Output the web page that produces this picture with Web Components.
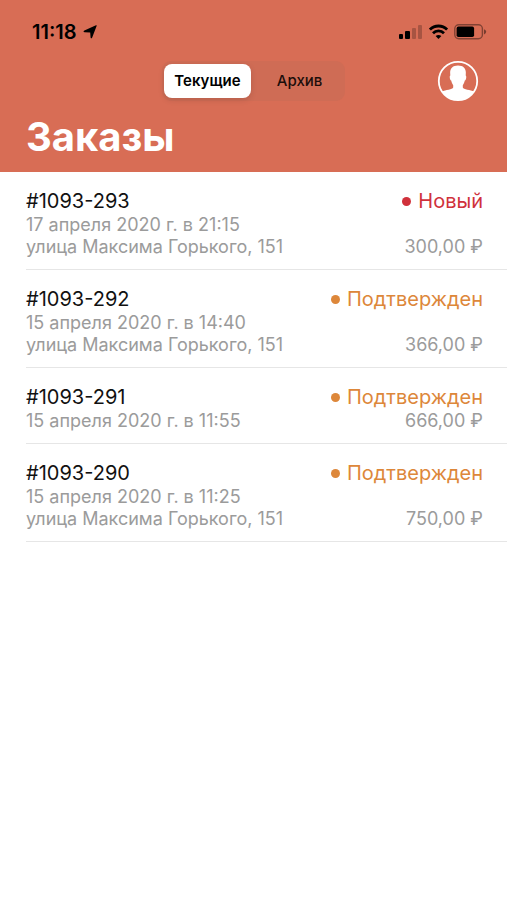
<!DOCTYPE html>
<html lang="ru">
<head>
  <meta charset="UTF-8">
  <meta name="viewport" content="width=device-width, initial-scale=1">
  <title>Заказы</title>
  <style>
    body {
      margin: 0;
      background: #fff;
      font-family: Inter, "Liberation Sans", sans-serif;
    }
  </style>
</head>
<body>
  <orders-header>
    <status-bar slot="status">11:18</status-bar>
    <segmented-tabs slot="tabs">
      <tab-button selected>Текущие</tab-button>
      <tab-button>Архив</tab-button>
    </segmented-tabs>
    <profile-button slot="profile"></profile-button>
    Заказы
  </orders-header>

  <order-list>
    <order-row status="new">
      <span slot="number">#1093-293</span>
      <span slot="date">17 апреля 2020 г. в 21:15</span>
      <span slot="address">улица Максима Горького, 151</span>
      <span slot="status">Новый</span>
      <span slot="price">300,00 ₽</span>
    </order-row>
    <order-row status="confirmed">
      <span slot="number">#1093-292</span>
      <span slot="date">15 апреля 2020 г. в 14:40</span>
      <span slot="address">улица Максима Горького, 151</span>
      <span slot="status">Подтвержден</span>
      <span slot="price">366,00 ₽</span>
    </order-row>
    <order-row status="confirmed">
      <span slot="number">#1093-291</span>
      <span slot="date">15 апреля 2020 г. в 11:55</span>
      <span slot="status">Подтвержден</span>
      <span slot="price">666,00 ₽</span>
    </order-row>
    <order-row status="confirmed">
      <span slot="number">#1093-290</span>
      <span slot="date">15 апреля 2020 г. в 11:25</span>
      <span slot="address">улица Максима Горького, 151</span>
      <span slot="status">Подтвержден</span>
      <span slot="price">750,00 ₽</span>
    </order-row>
  </order-list>

  <script>
    class OrdersHeader extends HTMLElement {
      connectedCallback() {
        this.attachShadow({ mode: 'open' });
        this.shadowRoot.innerHTML = `
          <style>
            :host {
              display: block;
              background: #d86d55;
              color: #fff;
            }

            nav {
              display: grid;
              grid-template-columns: 1fr auto 1fr;
              align-items: center;
              height: 42px;
              margin-top: 8px;
              padding: 0 28px;
            }

            .profile {
              justify-self: end;
            }

            h1 {
              margin: 0;
              padding: 10px 26px;
              font-size: 40px;
              line-height: 50px;
              font-weight: 700;
            }
          </style>

          <slot name="status"></slot>
          <nav>
            <span></span>
            <slot name="tabs"></slot>
            <div class="profile"><slot name="profile"></slot></div>
          </nav>
          <h1><slot></slot></h1>
        `;
      }
    }

    class StatusBar extends HTMLElement {
      connectedCallback() {
        this.attachShadow({ mode: 'open' });
        this.shadowRoot.innerHTML = `
          <style>
            :host {
              display: flex;
              align-items: center;
              justify-content: space-between;
              padding: 20px 20px 8px 32px;
              color: #000;
              font-size: 20px;
              line-height: 24px;
              font-weight: 600;
            }

            div {
              display: flex;
              align-items: center;
              gap: 6px;
            }

            svg {
              display: block;
            }
          </style>

          <div>
            <slot></slot>
            <svg width="14" height="14" viewBox="0 0 14 14" aria-hidden="true">
              <path d="M13.6 1 9.2 12.4Q8.2 14.2 7.6 12.4L7.2 7.4 1.6 7.2Q-.4 6.6 1.4 5.4L12.4.4Q14.2-.2 13.6 1Z"/>
            </svg>
          </div>
          <div>
            <svg width="24" height="16" viewBox="0 0 24 16" aria-hidden="true">
              <rect x="0" y="10" width="4" height="5" rx="1"/>
              <rect x="6" y="7" width="5" height="8" rx="1"/>
              <g opacity=".22">
                <rect x="13" y="4" width="4" height="11" rx="1"/>
                <rect x="19" y="1" width="4" height="14" rx="1"/>
              </g>
            </svg>
            <svg width="19" height="16" viewBox="0 0 19 16" aria-hidden="true">
              <g fill="none" stroke="#000" stroke-width="2.8">
                <path d="M.9 5.6C5.6.8 13.4.8 18.1 5.6"/>
                <path d="M4 9.2C7 6.2 12 6.2 15 9.2"/>
              </g>
              <path d="M6.6 12Q9.5 9.8 12.4 12L9.5 15Z"/>
            </svg>
            <svg width="33" height="16" viewBox="0 0 33 16" aria-hidden="true">
              <rect x=".8" y=".8" width="27.6" height="14" rx="4" fill="none" stroke="#000" stroke-width="1.4" opacity=".4"/>
              <rect x="2.6" y="2.6" width="17.5" height="10.4" rx="1.8"/>
              <path d="M30 5.2Q32.2 6 32.2 7.8T30 10.4Z" opacity=".45"/>
            </svg>
          </div>
        `;
      }
    }

    class SegmentedTabs extends HTMLElement {
      connectedCallback() {
        this.attachShadow({ mode: 'open' });
        this.shadowRoot.innerHTML = `
          <style>
            :host {
              display: grid;
              grid-template-columns: 1fr 1fr;
              gap: 6px;
              padding: 3px 2px;
              border-radius: 9px;
              background: #cf6c55;
            }
          </style>

          <slot></slot>
        `;

        this.addEventListener('click', (event) => {
          const tab = event.target.closest('tab-button');
          if (!tab) return;
          this.querySelectorAll('tab-button').forEach((item) => {
            item.toggleAttribute('selected', item === tab);
          });
        });
      }
    }

    class TabButton extends HTMLElement {
      connectedCallback() {
        this.attachShadow({ mode: 'open' });
        this.shadowRoot.innerHTML = `
          <style>
            :host {
              display: block;
            }

            button {
              display: block;
              width: 100%;
              height: 34px;
              padding: 0 10px;
              border: 0;
              border-radius: 8px;
              background: none;
              color: #1c0e0b;
              font: 500 15px/20px Inter, "Liberation Sans", sans-serif;
              cursor: pointer;
            }

            :host([selected]) button {
              background: #fff;
              color: #000;
              font-weight: 600;
              box-shadow: 0 2px 6px rgba(0, 0, 0, 0.12);
            }
          </style>

          <button type="button"><slot></slot></button>
        `;
      }
    }

    class ProfileButton extends HTMLElement {
      connectedCallback() {
        this.attachShadow({ mode: 'open' });
        this.shadowRoot.innerHTML = `
          <style>
            :host {
              display: block;
            }

            button {
              display: block;
              padding: 0;
              border: 0;
              background: none;
              cursor: pointer;
            }

            svg {
              display: block;
            }
          </style>

          <button type="button" aria-label="Профиль">
            <svg width="42" height="42" viewBox="0 0 42 42">
              <circle cx="21" cy="21" r="19.2" fill="none" stroke="#fff" stroke-width="1.8"/>
              <path fill="#fff" d="M21 5.4C26.6 5.4 29.2 8.6 28.8 13.4L28.7 15.6C29.7 15.9 29.3 20 27.8 20.6C27.3 22.7 26.6 24 25.8 25.2V27.4C26.4 29.6 33.4 29.6 37.2 31.6A19.4 19.4 0 0 1 4.8 31.6C8.6 29.6 15.6 29.6 16.2 27.4V25.2C15.4 24 14.7 22.7 14.2 20.6C12.7 20 12.3 15.9 13.3 15.6L13.2 13.4C12.8 8.6 15.4 5.4 21 5.4Z"/>
            </svg>
          </button>
        `;
      }
    }

    class OrderList extends HTMLElement {
      connectedCallback() {
        this.attachShadow({ mode: 'open' });
        this.setAttribute('role', 'list');
        this.shadowRoot.innerHTML = `
          <style>
            :host {
              display: block;
              padding-left: 26px;
            }
          </style>

          <slot></slot>
        `;
      }
    }

    class OrderRow extends HTMLElement {
      connectedCallback() {
        this.attachShadow({ mode: 'open' });
        this.setAttribute('role', 'listitem');
        this.shadowRoot.innerHTML = `
          <style>
            :host {
              display: flex;
              justify-content: space-between;
              padding: 17px 24px 11px 0;
              border-bottom: 1px solid #e6e6e6;
              color: #9b9b9b;
              font-size: 18px;
              line-height: 22px;
            }

            :host([status="new"]) {
              --status-color: #d0313b;
            }

            :host([status="confirmed"]) {
              --status-color: #dd873a;
            }

            .info,
            .state {
              display: flex;
              flex-direction: column;
            }

            .state {
              align-items: flex-end;
              justify-content: space-between;
            }

            .number,
            .status {
              margin-bottom: 1px;
              font-size: 20px;
              line-height: 24px;
            }

            .number {
              color: #111;
            }

            .status {
              display: flex;
              align-items: center;
              gap: 7px;
              color: var(--status-color);
            }

            .status::before {
              content: '';
              width: 9px;
              height: 9px;
              border-radius: 50%;
              background: var(--status-color);
            }
          </style>

          <div class="info">
            <div class="number"><slot name="number"></slot></div>
            <slot name="date"></slot>
            <slot name="address"></slot>
          </div>
          <div class="state">
            <div class="status"><slot name="status"></slot></div>
            <slot name="price"></slot>
          </div>
        `;
      }
    }

    customElements.define('orders-header', OrdersHeader);
    customElements.define('status-bar', StatusBar);
    customElements.define('segmented-tabs', SegmentedTabs);
    customElements.define('tab-button', TabButton);
    customElements.define('profile-button', ProfileButton);
    customElements.define('order-list', OrderList);
    customElements.define('order-row', OrderRow);
  </script>
</body>
</html>
